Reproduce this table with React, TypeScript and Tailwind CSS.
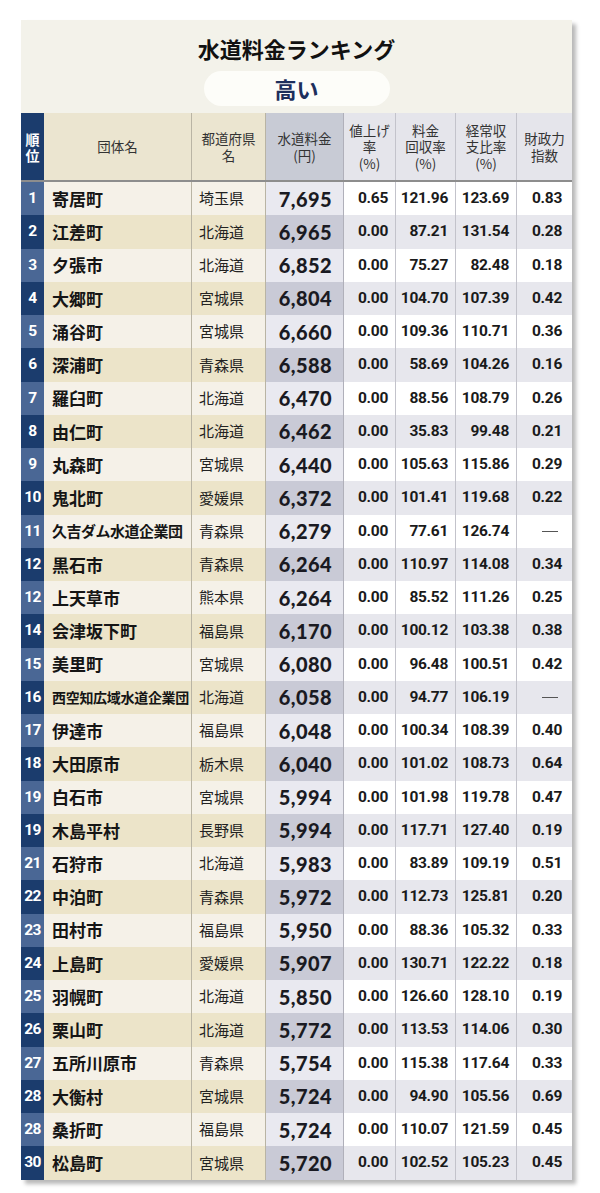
type Row = {
  rank: number
  name: string
  pref: string
  price: string
  up: string
  recovery: string
  balance: string
  fiscal: string
}

const rows: Row[] = [
  { rank: 1, name: '寄居町', pref: '埼玉県', price: '7,695', up: '0.65', recovery: '121.96', balance: '123.69', fiscal: '0.83' },
  { rank: 2, name: '江差町', pref: '北海道', price: '6,965', up: '0.00', recovery: '87.21', balance: '131.54', fiscal: '0.28' },
  { rank: 3, name: '夕張市', pref: '北海道', price: '6,852', up: '0.00', recovery: '75.27', balance: '82.48', fiscal: '0.18' },
  { rank: 4, name: '大郷町', pref: '宮城県', price: '6,804', up: '0.00', recovery: '104.70', balance: '107.39', fiscal: '0.42' },
  { rank: 5, name: '涌谷町', pref: '宮城県', price: '6,660', up: '0.00', recovery: '109.36', balance: '110.71', fiscal: '0.36' },
  { rank: 6, name: '深浦町', pref: '青森県', price: '6,588', up: '0.00', recovery: '58.69', balance: '104.26', fiscal: '0.16' },
  { rank: 7, name: '羅臼町', pref: '北海道', price: '6,470', up: '0.00', recovery: '88.56', balance: '108.79', fiscal: '0.26' },
  { rank: 8, name: '由仁町', pref: '北海道', price: '6,462', up: '0.00', recovery: '35.83', balance: '99.48', fiscal: '0.21' },
  { rank: 9, name: '丸森町', pref: '宮城県', price: '6,440', up: '0.00', recovery: '105.63', balance: '115.86', fiscal: '0.29' },
  { rank: 10, name: '鬼北町', pref: '愛媛県', price: '6,372', up: '0.00', recovery: '101.41', balance: '119.68', fiscal: '0.22' },
  { rank: 11, name: '久吉ダム水道企業団', pref: '青森県', price: '6,279', up: '0.00', recovery: '77.61', balance: '126.74', fiscal: '—' },
  { rank: 12, name: '黒石市', pref: '青森県', price: '6,264', up: '0.00', recovery: '110.97', balance: '114.08', fiscal: '0.34' },
  { rank: 12, name: '上天草市', pref: '熊本県', price: '6,264', up: '0.00', recovery: '85.52', balance: '111.26', fiscal: '0.25' },
  { rank: 14, name: '会津坂下町', pref: '福島県', price: '6,170', up: '0.00', recovery: '100.12', balance: '103.38', fiscal: '0.38' },
  { rank: 15, name: '美里町', pref: '宮城県', price: '6,080', up: '0.00', recovery: '96.48', balance: '100.51', fiscal: '0.42' },
  { rank: 16, name: '西空知広域水道企業団', pref: '北海道', price: '6,058', up: '0.00', recovery: '94.77', balance: '106.19', fiscal: '—' },
  { rank: 17, name: '伊達市', pref: '福島県', price: '6,048', up: '0.00', recovery: '100.34', balance: '108.39', fiscal: '0.40' },
  { rank: 18, name: '大田原市', pref: '栃木県', price: '6,040', up: '0.00', recovery: '101.02', balance: '108.73', fiscal: '0.64' },
  { rank: 19, name: '白石市', pref: '宮城県', price: '5,994', up: '0.00', recovery: '101.98', balance: '119.78', fiscal: '0.47' },
  { rank: 19, name: '木島平村', pref: '長野県', price: '5,994', up: '0.00', recovery: '117.71', balance: '127.40', fiscal: '0.19' },
  { rank: 21, name: '石狩市', pref: '北海道', price: '5,983', up: '0.00', recovery: '83.89', balance: '109.19', fiscal: '0.51' },
  { rank: 22, name: '中泊町', pref: '青森県', price: '5,972', up: '0.00', recovery: '112.73', balance: '125.81', fiscal: '0.20' },
  { rank: 23, name: '田村市', pref: '福島県', price: '5,950', up: '0.00', recovery: '88.36', balance: '105.32', fiscal: '0.33' },
  { rank: 24, name: '上島町', pref: '愛媛県', price: '5,907', up: '0.00', recovery: '130.71', balance: '122.22', fiscal: '0.18' },
  { rank: 25, name: '羽幌町', pref: '北海道', price: '5,850', up: '0.00', recovery: '126.60', balance: '128.10', fiscal: '0.19' },
  { rank: 26, name: '栗山町', pref: '北海道', price: '5,772', up: '0.00', recovery: '113.53', balance: '114.06', fiscal: '0.30' },
  { rank: 27, name: '五所川原市', pref: '青森県', price: '5,754', up: '0.00', recovery: '115.38', balance: '117.64', fiscal: '0.33' },
  { rank: 28, name: '大衡村', pref: '宮城県', price: '5,724', up: '0.00', recovery: '94.90', balance: '105.56', fiscal: '0.69' },
  { rank: 28, name: '桑折町', pref: '福島県', price: '5,724', up: '0.00', recovery: '110.07', balance: '121.59', fiscal: '0.45' },
  { rank: 30, name: '松島町', pref: '宮城県', price: '5,720', up: '0.00', recovery: '102.52', balance: '105.23', fiscal: '0.45' },
]

const jp = "font-['Noto_Sans_CJK_JP','Noto_Sans',sans-serif]"
const num = "font-['Roboto','Liberation_Sans',sans-serif]"
const grid = 'grid grid-cols-[23px_148px_74px_78px_52px_60px_61px_55px]'

function HeaderCell({ lines, className }: { lines: string[]; className: string }) {
  return (
    <div className={`flex flex-col items-center justify-center text-[13.5px] text-[#333] ${className}`}>
      {lines.map((l, i) => (
        <span key={i} className="block h-[16.5px] leading-[16.5px]">
          {l}
        </span>
      ))}
    </div>
  )
}

function TableRow({ row, odd }: { row: Row; odd: boolean }) {
  const longName = row.name.length >= 9
  return (
    <div className={`${grid} h-[33.25px]`}>
      <div
        className={`flex items-center justify-center text-[15.5px] font-bold text-white tracking-[-0.6px] ${num} ${
          odd ? 'bg-[#4a6795]' : 'bg-[#1b3c6d]'
        }`}
      >
        {row.rank}
      </div>
      <div
        className={`flex items-center pl-[8px] font-bold text-[#151515] border-r border-[#b9b4a4] whitespace-nowrap ${jp} ${
          odd ? 'bg-[#f5f1e8]' : 'bg-[#ece4c9]'
        } ${row.name.length >= 10 ? 'text-[14px] tracking-[-0.3px] pl-[5px]' : longName ? 'text-[15px] tracking-[-0.5px]' : 'text-[17px]'}`}
      >
        {row.name}
      </div>
      <div
        className={`flex items-center pl-[7px] text-[15px] text-[#222] border-r border-[#b9b4a4] ${jp} ${
          odd ? 'bg-[#f5f1e8]' : 'bg-[#ece4c9]'
        }`}
      >
        {row.pref}
      </div>
      <div
        className={`flex items-center justify-end pr-[11px] text-[20px] font-black text-[#1a1a22] tracking-[0.4px] font-['Lato','Roboto',sans-serif] border-r border-[#b0b0ba] ${
          odd ? 'bg-[#e9e9f0]' : 'bg-[#c9cad6]'
        }`}
      >
        {row.price}
      </div>
      {[row.up, row.recovery, row.balance, row.fiscal].map((v, i) => (
        <div
          key={i}
          className={`flex items-center justify-end text-[15.5px] font-bold text-[#1a1a1a] tracking-[-0.3px] ${num} ${
            i < 3 ? 'border-r border-[#c3c3cb] pr-[7px]' : 'pr-[10px]'
          } ${odd ? 'bg-white' : 'bg-[#e7e7ed]'}`}
        >
          {v === '—' ? <span className="mr-[4px] block h-px w-[16px] bg-[#555]" /> : v}
        </div>
      ))}
    </div>
  )
}

export default function App() {
  return (
    <div className="w-[600px] h-[1193px] bg-white pt-[20px] pl-[21px]">
      <div className="w-[551px] bg-[#f3f2ea] shadow-[4px_4px_4px_rgba(0,0,0,0.28)]">
        <div className={`flex h-[93px] flex-col items-center ${jp}`}>
          <h1 className="mt-[14px] text-[22px] leading-[28px] font-bold text-[#111]">水道料金ランキング</h1>
          <div className="mt-[9px] flex h-[35px] w-[186px] items-center justify-center rounded-full bg-[#fdfdf9]">
            <span className="text-[22px] font-bold text-[#1d2f5c]">高い</span>
          </div>
        </div>

        <div className={`${grid} h-[69px] border-b-2 border-[#8d8d8d] ${jp}`}>
          <div className="flex flex-col items-center justify-center bg-[#1b3c6d] text-[14px] font-bold text-white">
            <span className="block h-[16px] leading-[16px]">順</span>
            <span className="block h-[16px] leading-[16px]">位</span>
          </div>
          <HeaderCell lines={['団体名']} className="bg-[#ebe5d0] border-r border-[#b9b4a4]" />
          <HeaderCell lines={['都道府県', '名']} className="bg-[#ebe5d0] border-r border-[#b9b4a4]" />
          <HeaderCell lines={['水道料金', '(円)']} className="bg-[#c8cbd5] border-r border-[#b0b0ba]" />
          <HeaderCell lines={['値上げ', '率', '(%)']} className="bg-[#e5e5eb] border-r border-[#c3c3cb]" />
          <HeaderCell lines={['料金', '回収率', '(%)']} className="bg-[#e5e5eb] border-r border-[#c3c3cb]" />
          <HeaderCell lines={['経常収', '支比率', '(%)']} className="bg-[#e5e5eb] border-r border-[#c3c3cb]" />
          <HeaderCell lines={['財政力', '指数']} className="bg-[#e5e5eb]" />
        </div>

        <div>
          {rows.map((r, i) => (
            <TableRow key={i} row={r} odd={i % 2 === 0} />
          ))}
        </div>
      </div>
    </div>
  )
}
